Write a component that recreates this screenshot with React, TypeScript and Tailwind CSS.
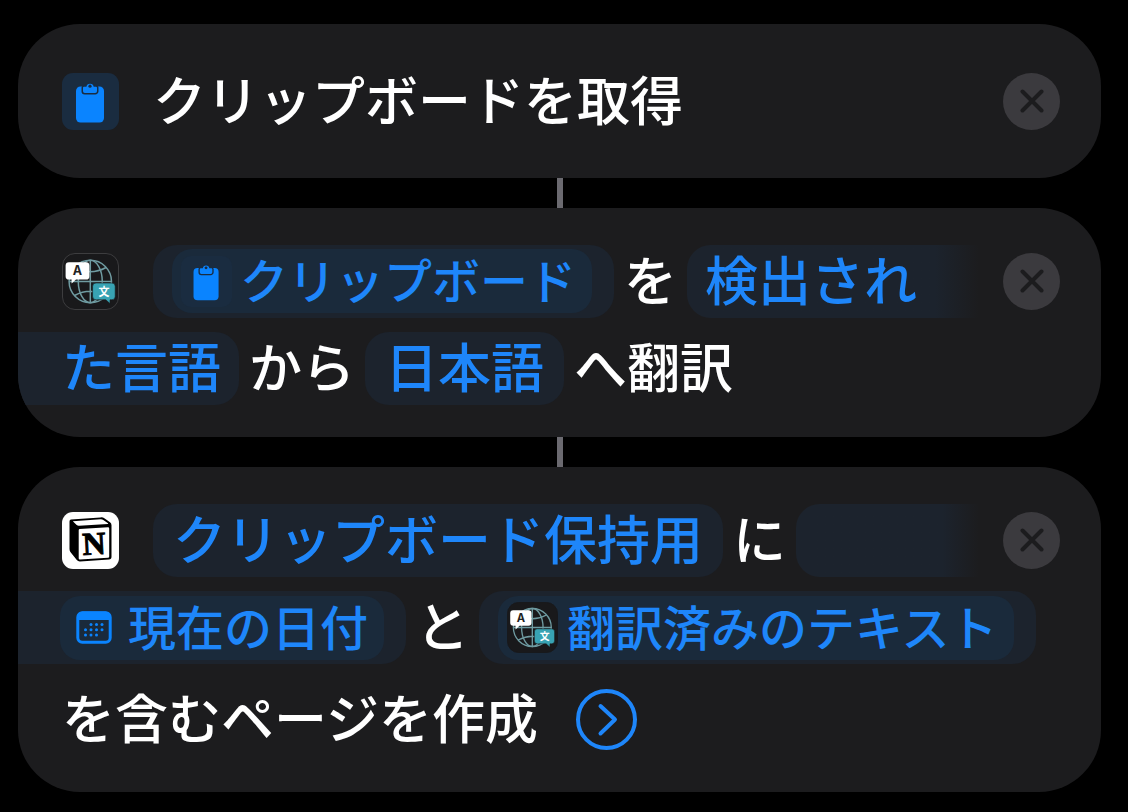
import React from 'react';

function ClipboardIcon({ className }: { className: string }) {
  return (
    <svg viewBox="0 0 57 57" className={className} aria-hidden="true">
      <rect width="57" height="57" rx="11" className="fill-[#1a2c40]" />
      <rect x="14" y="13.5" width="28" height="36" rx="4.5" className="fill-[#0a84ff]" />
      <path
        d="M22 13.800h2.400a3.700 3.700 0 0 1 7.300 0H34q1 0 1 1v3.400a1.800 1.800 0 0 1-1.800 1.800H22.800a1.800 1.800 0 0 1-1.800-1.800v-3.400q0-1 1-1z"
        className="fill-[#0a84ff] stroke-[#1a2c40]"
        strokeWidth="3"
        style={{ paintOrder: 'stroke' }}
      />
      <circle cx="28" cy="13.200" r="1.600" className="fill-[#1a2c40]" />
    </svg>
  );
}

function TranslateIcon({ className, border }: { className: string; border?: boolean }) {
  return (
    <svg viewBox="0 0 57 57" className={className} aria-hidden="true">
      <rect
        x="0.5"
        y="0.5"
        width="56"
        height="56"
        rx="12.5"
        fill="#19191b"
        stroke={border ? '#3d3d3f' : '#19191b'}
      />
      <g fill="none" stroke="#6f9ba1" strokeWidth="1.500">
        <circle cx="28.300" cy="28.500" r="21.200" />
        <ellipse cx="28.300" cy="28.500" rx="12" ry="21.200" />
        <path d="M28.300 7.300v42.400M7 28.500h42.500M12.500 14.500q15.800 8.500 31.600 0M12.500 42.500q15.800-8.500 31.600 0" />
      </g>
      <path
        d="M7 9.200h17a3.400 3.400 0 0 1 3.400 3.400v10.600a3.400 3.400 0 0 1-3.400 3.400H14l-4.400 4v-4H7a3.400 3.400 0 0 1-3.400-3.400V12.600a3.400 3.400 0 0 1 3.400-3.400z"
        fill="#fff"
      />
      <path
        d="M34 30h15.800a3.400 3.400 0 0 1 3.400 3.400v10a3.400 3.400 0 0 1-3.400 3.400h-1.800v3.800l-4.200-3.800H34a3.400 3.400 0 0 1-3.400-3.400v-10A3.400 3.400 0 0 1 34 30z"
        fill="#38a3b3"
        stroke="#19191b"
        strokeWidth="0.6"
      />
      <text x="15.500" y="22.400" textAnchor="middle" fontSize="12.500" fontWeight="700" fill="#222" fontFamily="Inter, sans-serif">
        A
      </text>
      <text x="42" y="42.500" textAnchor="middle" fontSize="11" fontWeight="700" fill="#fff" fontFamily="'Noto Sans CJK JP', sans-serif">
        文
      </text>
    </svg>
  );
}

function NotionIcon({ className }: { className: string }) {
  return (
    <svg viewBox="0 0 57 57" className={className} aria-hidden="true">
      <rect width="57" height="57" rx="11" fill="#fff" />
      <path
        d="M9 7.600 38.500 5.400q2.400-.2 4.200 1.100l5.300 3.700q1.500 1.100 1.500 3v31.600q0 2.600-2.600 2.800L18 49.400q-2 .1-3.200-1.400l-6-7.500Q7.500 39 7.500 37V9.500q0-1.700 1.500-1.900z"
        fill="#000"
      />
      <path d="M10.800 9.300 38.600 7.300q1.500-.1 2.700.7l4.700 3.300q.6.500-.2.600L17 13.700q-1.300.1-2.300-.7z" fill="#fff" />
      <path d="M17.800 17 46 15.200q1.200 0 1.200 1.200v28q0 1.300-1.300 1.400L18 47.500q-1.300.1-1.300-1.200V18.200q0-1.100 1.100-1.200z" fill="#fff" />
      <text
        x="32"
        y="42.500"
        textAnchor="middle"
        fontSize="32"
        fontWeight="700"
        fontFamily="'Liberation Serif', serif"
        stroke="#000"
        strokeWidth="1"
        transform="rotate(-3 32 31)"
      >
        N
      </text>
    </svg>
  );
}

function CalendarIcon() {
  const dots = [
    [15, 13.5], [20.5, 13.5], [26, 13.5],
    [9.5, 18.8], [15, 18.8], [20.5, 18.8], [26, 18.8],
    [9.5, 24], [15, 24], [20.5, 24],
  ];
  return (
    <svg viewBox="0 0 36 33" className="h-[33px] w-9 shrink-0 text-[#0a84ff]" aria-hidden="true">
      <rect x="1.800" y="1.700" width="32.400" height="29.600" rx="4.500" fill="none" stroke="currentColor" strokeWidth="3" />
      <path d="M1 9V6a5.500 5.500 0 0 1 5.500-5.500h23A5.500 5.500 0 0 1 35 6v3z" fill="currentColor" />
      {dots.map(([x, y]) => (
        <circle key={`${x}-${y}`} cx={x} cy={y} r="1.500" fill="currentColor" />
      ))}
    </svg>
  );
}

function CloseButton() {
  return (
    <button
      type="button"
      aria-label="アクションを削除"
      className="flex size-[57px] shrink-0 items-center justify-center rounded-full bg-[#3b3a3e]"
    >
      <svg viewBox="0 0 24 24" className="size-6" fill="none" stroke="#1c1c1e" strokeWidth="4" strokeLinecap="round" aria-hidden="true">
        <path d="M2.500 2.500l19 19M21.500 2.500l-19 19" />
      </svg>
    </button>
  );
}

function Card({ children }: { children: React.ReactNode }) {
  return (
    <section className="w-full overflow-hidden rounded-[62px] bg-[#1c1c1e] pt-9 pr-[41px] pb-8 pl-11">
      {children}
    </section>
  );
}

function Connector() {
  return <div className="h-[30px] w-1.5 bg-[#6b6a70]" />;
}

// The CJK face sits low in its line box, the bottom padding centres it
function Label({ children }: { children: React.ReactNode }) {
  return <span className="block pb-1.5">{children}</span>;
}

// First line of an action: app icon, sentence, close button
function FirstLine({ icon, children }: { icon: React.ReactNode; children: React.ReactNode }) {
  return (
    <div className="flex h-[74px] items-center">
      <div className="mr-[34px] shrink-0">{icon}</div>
      <div className="mr-6 flex min-w-0 flex-1 items-center gap-2.5">{children}</div>
      <CloseButton />
    </div>
  );
}

const pill = 'flex h-[73px] shrink-0 items-center bg-[#1c232d] text-[#1e86fa]';
const token = 'flex h-16 items-center rounded-[20px] bg-[#1a2a3b] pr-4 text-[48px]';

export default function App() {
  return (
    <main
      lang="ja"
      className="flex min-h-screen flex-col items-center bg-black pt-6 pr-[27px] pb-5 pl-[18px] font-['Noto_Sans_CJK_JP',sans-serif] text-[53px] leading-none font-medium whitespace-nowrap text-white"
    >
      <Card>
        <div className="flex h-[86px] items-center pb-1">
          <ClipboardIcon className="mr-[34px] size-[57px] shrink-0" />
          <h2 className="flex-1">
            <Label>クリップボードを取得</Label>
          </h2>
          <CloseButton />
        </div>
      </Card>

      <Connector />

      <Card>
        <FirstLine icon={<TranslateIcon className="size-[57px]" border />}>
          <button type="button" className={`${pill} rounded-3xl pr-[22px] pl-[19px]`}>
            <span className={`${token} gap-2 pl-[9px]`}>
              <ClipboardIcon className="size-[51px]" />
              <Label>クリップボード</Label>
            </span>
          </button>
          <Label>を</Label>
          <button
            type="button"
            className="flex h-[73px] flex-1 items-center rounded-l-3xl bg-linear-to-r from-[#1c232d] from-85% to-[#1c1c1e] pl-[18px] text-[#1e86fa]"
          >
            <Label>検出され</Label>
          </button>
        </FirstLine>
        <div className="mt-3.5 flex items-center gap-2.5">
          <button type="button" className={`${pill} -ml-11 rounded-r-3xl pr-[18px] pl-11`}>
            <Label>た言語</Label>
          </button>
          <Label>から</Label>
          <button type="button" className={`${pill} rounded-3xl px-5`}>
            <Label>日本語</Label>
          </button>
          <Label>へ翻訳</Label>
        </div>
      </Card>

      <Connector />

      <Card>
        <FirstLine icon={<NotionIcon className="size-[57px]" />}>
          <button type="button" className={`${pill} rounded-3xl px-5`}>
            <Label>クリップボード保持用</Label>
          </button>
          <Label>に</Label>
          <span className="h-[73px] flex-1 rounded-l-3xl bg-linear-to-r from-[#1c232d] from-80% to-[#1c1c1e]" />
        </FirstLine>
        <div className="mt-3.5 flex items-center gap-2.5">
          <button type="button" className={`${pill} -ml-11 rounded-r-3xl pr-[22px] pl-[42px]`}>
            <span className={`${token} gap-4 pl-4`}>
              <CalendarIcon />
              <Label>現在の日付</Label>
            </span>
          </button>
          <Label>と</Label>
          <button type="button" className={`${pill} rounded-3xl pr-[22px] pl-[19px]`}>
            <span className={`${token} gap-[9px] pl-[9px]`}>
              <TranslateIcon className="size-[51px]" />
              <Label>翻訳済みのテキスト</Label>
            </span>
          </button>
        </div>
        <div className="mt-[15px] flex h-[81px] items-center gap-[38px]">
          <Label>を含むページを作成</Label>
          <button type="button" aria-label="詳細を表示" className="size-[61px] shrink-0">
            <svg
              viewBox="0 0 61 61"
              className="size-full"
              fill="none"
              stroke="#1e86fa"
              strokeWidth="4"
              strokeLinecap="round"
              strokeLinejoin="round"
              aria-hidden="true"
            >
              <circle cx="30.500" cy="30.500" r="28.500" />
              <path d="M24.500 17 39 30.500 24.500 44.500" />
            </svg>
          </button>
        </div>
      </Card>
    </main>
  );
}
